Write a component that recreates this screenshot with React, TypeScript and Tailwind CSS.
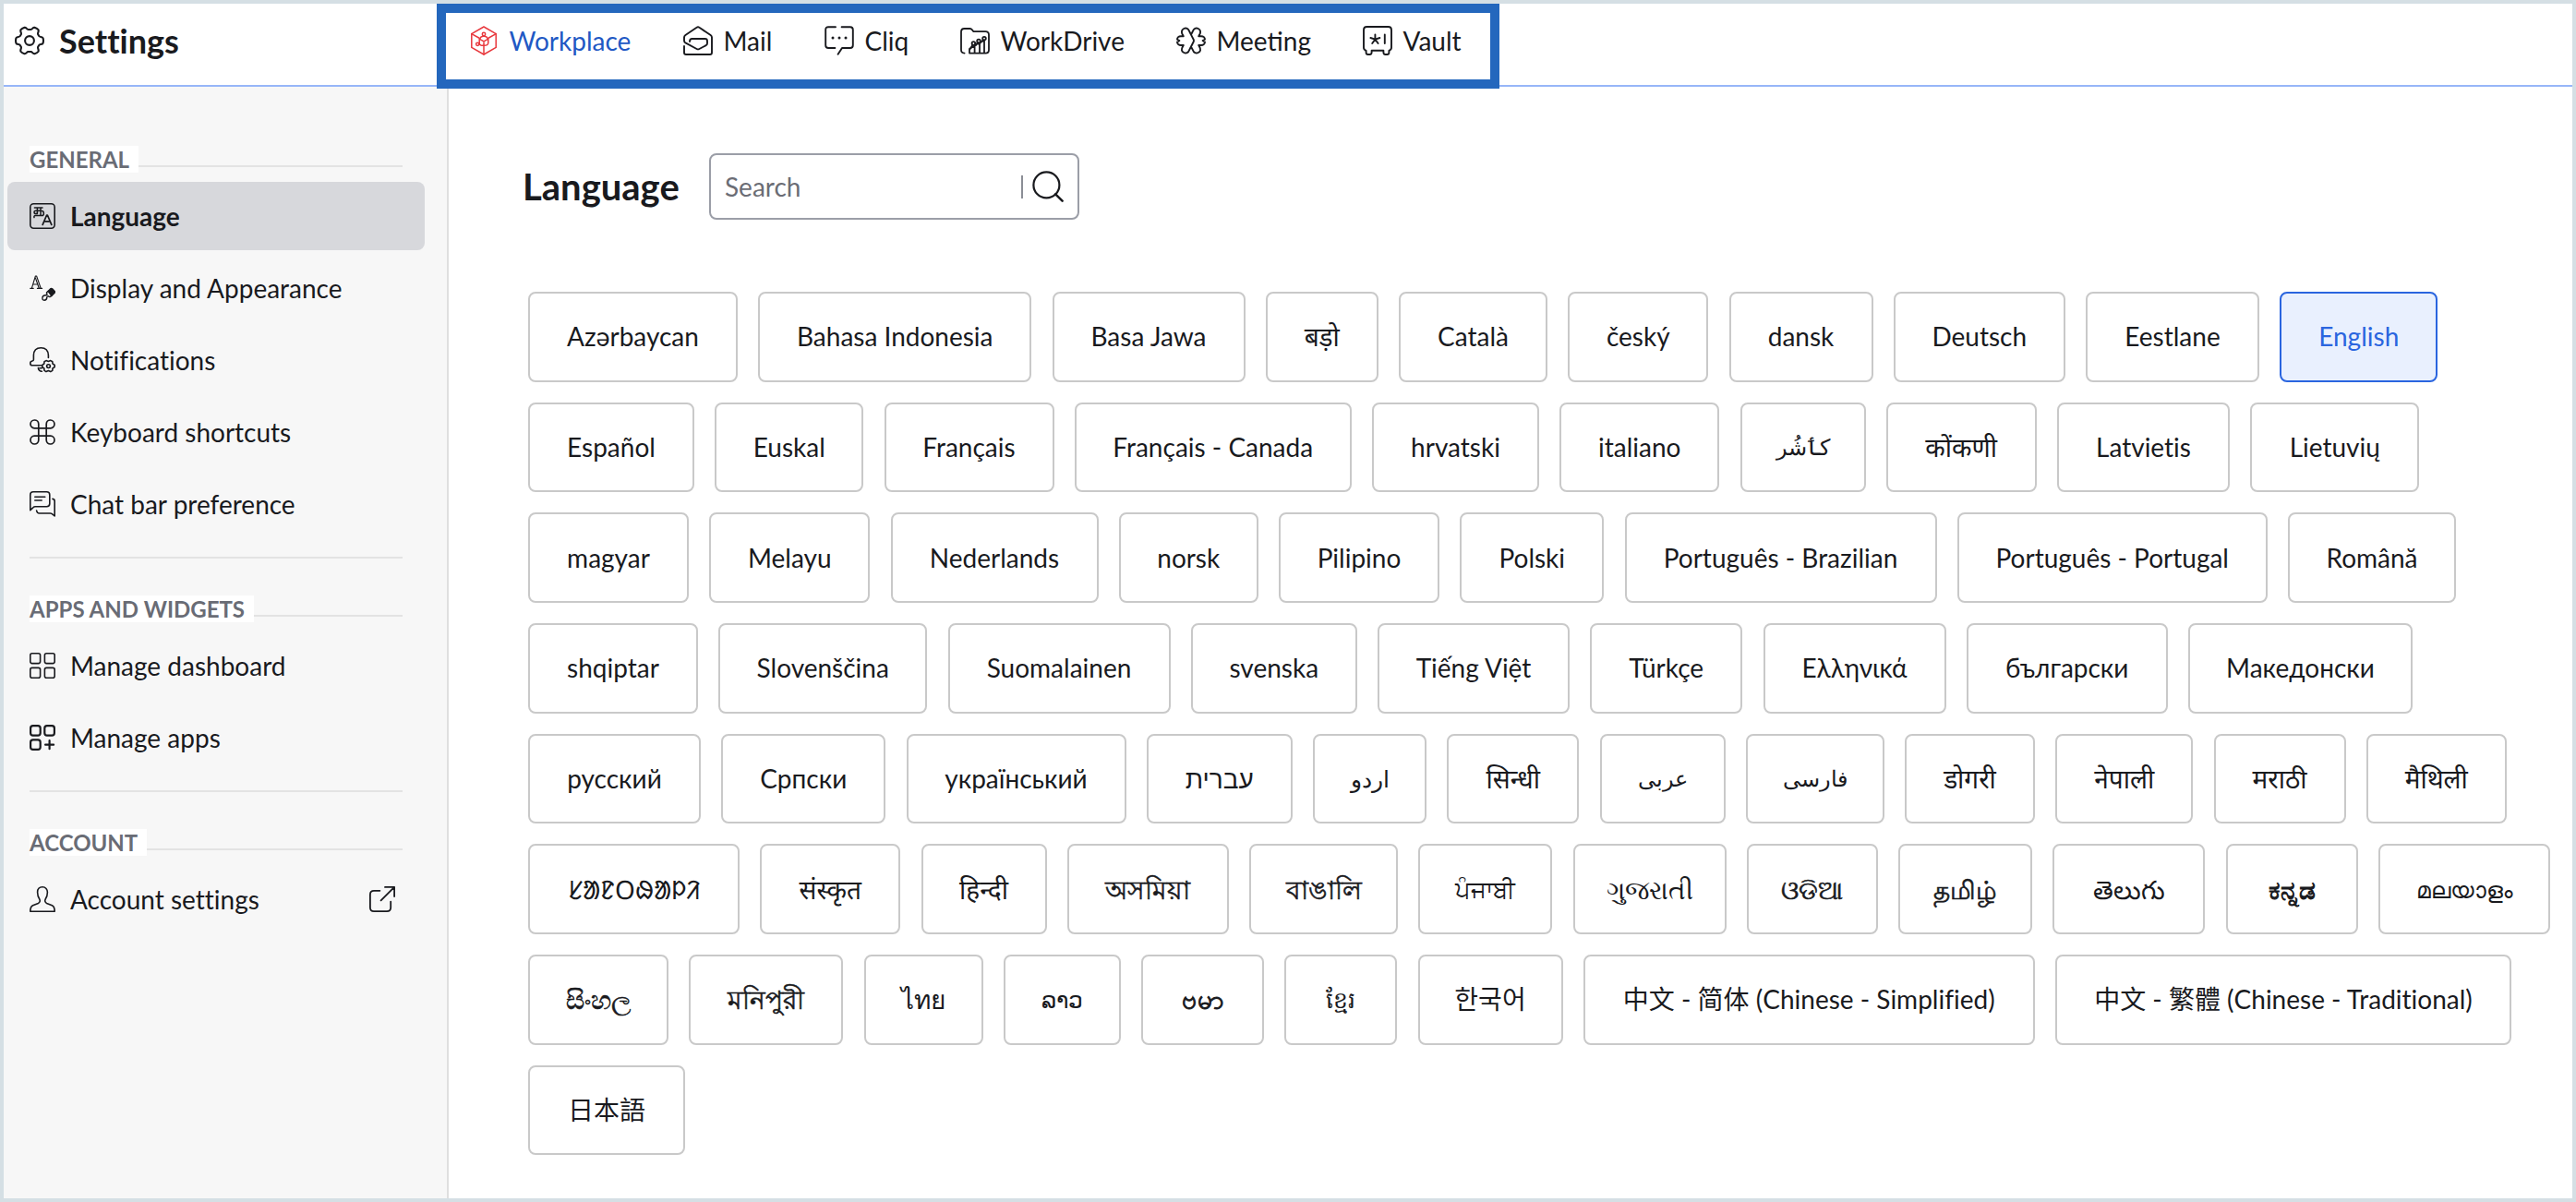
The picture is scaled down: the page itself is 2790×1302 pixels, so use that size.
import type { ReactNode } from "react";

type SvgProps = { children: ReactNode; size?: string; box?: string; sw?: number };

function Svg({ children, size = "size-7", box = "0 0 28 28", sw = 1.8 }: SvgProps) {
  return (
    <svg
      viewBox={box}
      className={`${size} shrink-0`}
      fill="none"
      stroke="currentColor"
      strokeWidth={sw}
      strokeLinecap="round"
      strokeLinejoin="round"
    >
      {children}
    </svg>
  );
}

const BIG = "size-8";
const BIG_BOX = "0 0 32 32";

const GearIcon = () => (
  <Svg size={BIG} box={BIG_BOX} sw={2.1}>
    <path d="M10.5 1.8 C12.6 1.4 12.8 4 14.6 4 H17.4 C19.2 4 19.4 1.4 21.5 1.8 C23 2.3 24.6 3.2 25.4 4.2 C26.6 6 24.4 7.6 25.2 9.2 L26.2 11 C27.2 12.4 30 11.4 30.6 13.4 C31.1 15.2 31.1 16.8 30.6 18.6 C30 20.6 27.2 19.6 26.2 21 L25.2 22.8 C24.4 24.4 26.6 26 25.4 27.8 C24.6 28.8 23 29.7 21.5 30.2 C19.4 30.6 19.2 28 17.4 28 H14.6 C12.8 28 12.6 30.6 10.5 30.2 C9 29.7 7.4 28.8 6.6 27.8 C5.4 26 7.6 24.4 6.8 22.8 L5.8 21 C4.8 19.6 2 20.6 1.4 18.6 C0.9 16.8 0.9 15.2 1.4 13.4 C2 11.4 4.8 12.4 5.8 11 L6.8 9.2 C7.6 7.6 5.4 6 6.6 4.2 C7.4 3.2 9 2.3 10.5 1.8 Z" />
    <circle cx="16" cy="16" r="4.9" />
  </Svg>
);

const WorkplaceIcon = () => (
  <svg viewBox="0 0 28 32" className="h-8 w-7 shrink-0" fill="none" stroke="#e8383d" strokeWidth="1.5" strokeLinejoin="round" strokeLinecap="round">
    <path d="M14 1 L27.2 8.6 V23.4 L14 31 L0.8 23.4 V8.6 Z" />
    <path d="M0.8 8.6 L8.6 13 M27.2 8.6 L19.4 13 M14 18 V31" />
    <circle cx="14" cy="9" r="1.7" />
    <path d="M10 14.6 C9.6 12.4 11.4 11.2 14 11.2 C16.6 11.2 18.4 12.4 18 14.6 L14 16.8 Z" />
    <path d="M9.2 13.4 V18.6 C9.2 21.6 12.4 21.4 14 21.2 M18.8 13.4 V18.6 C18.8 21 16 21.4 14 21.2" />
    <circle cx="7.2" cy="19.8" r="1.6" />
  </svg>
);

const MailIcon = () => (
  <Svg size={BIG} box={BIG_BOX} sw={1.9}>
    <path d="M1 22 V29 Q1 31 3 31 H29 Q31 31 31 29 V12.5 Q31 11 29.6 10 L17.4 1.8 Q16 0.8 14.6 1.8 L2.4 10 Q1 11 1 12.5 V16 Q1 17.6 2.4 18.4 L14.6 25 Q16 25.8 17.4 25 L24.6 21.2 Q26 20.4 26 19 V16.4 Q26 14 23.6 14 H9.6 Q7 14 7 17" />
  </Svg>
);

const CliqIcon = () => (
  <Svg size={BIG} box={BIG_BOX} sw={1.9}>
    <path d="M12 1.2 H4.2 Q1.2 1.2 1.2 4.2 V21 Q1.2 24 4.2 24 H11.4 M18.6 1.2 H27.8 Q30.8 1.2 30.8 4.2 V21 Q30.8 24 27.8 24 H19 L14.6 30.8" />
    <path d="M9 13 h0.01 M16 13 h0.01 M23 13 h0.01" strokeWidth="3" />
  </Svg>
);

const WorkDriveIcon = () => (
  <Svg size={BIG} box={BIG_BOX} sw={1.8}>
    <path d="M4.6 29.6 Q1 29.6 1 26 V6.4 Q1 3 4.4 3 H10.4 Q12 3 13 4.4 L14.4 6.2 H27.4 Q31 6.2 31 9.8 V26 Q31 29.6 27.4 29.6 H10 V26 L13.4 20.8" />
    <path d="M10 25 L15.6 21.6 V29 M15.8 20.4 L21 19 V29 M18.8 18 L17 21 M22 17.8 L26 16 V29 M24.6 15.4 L21.6 18.6" />
    <circle cx="14.4" cy="19" r="1.8" />
    <circle cx="20" cy="16.4" r="1.8" />
    <circle cx="26" cy="13.6" r="1.8" />
  </Svg>
);

const MeetingIcon = () => (
  <Svg size={BIG} box={BIG_BOX} sw={1.9}>
    <path d="M16 9.6 L14.2 6 C13.2 2.8 10.6 1.8 8.2 3 C5.4 4.4 5.4 7 6.8 9.6 L7.8 11.2 H5 C2.6 11.2 1 12.8 1 14.6 L3.4 16 L1 17.6 C1 19.6 2.8 21 5 21 H7.8 L6.8 22.8 C5.4 25.4 5.4 27.6 8.2 29 C10.6 30.2 13.2 29.2 14.2 26 L18.8 17 Q19.2 16 18.8 15 L16 9.6 L17.8 6 C18.8 2.8 21.4 1.8 23.8 3 C26.6 4.4 26.6 7 25.2 9.6 L24.2 11.2 H27 C29.4 11.2 31 12.8 31 14.6 L28.6 16 L31 17.6 C31 19.6 29.2 21 27 21 H24.2 L25.2 22.8 C26.6 25.4 26.6 27.6 23.8 29 C21.4 30.2 18.8 29.2 17.8 26 L16 22.6" />
  </Svg>
);

const VaultIcon = () => (
  <Svg size={BIG} box={BIG_BOX} sw={1.9}>
    <path d="M4.4 1 H27.6 Q31 1 31 4.4 V23.6 Q31 26 28.4 27 V29 Q28.4 31 26.4 31 H24.4 Q22.6 31 22.4 29 V26.8 H9.6 V29 Q9.4 31 7.6 31 H5.6 Q3.6 31 3.6 29 V27 Q1 26 1 23.6 V4.4 Q1 1 4.4 1 Z" />
    <path d="M13.4 9.4 V14.6 M8.4 13 L13.4 14.6 L18.4 13 M13.4 14.6 L10.2 19 M13.4 14.6 L16.6 19 M23.8 9.4 V19" />
  </Svg>
);

const LanguageIcon = () => (
  <Svg sw={1.6}>
    <rect x="0.8" y="0.8" width="26.4" height="26.4" rx="3.6" />
    <path d="M5.4 5 H14 M8.4 5 V11.4 M5 15.6 Q4.4 13.6 6.4 13.6 H13.4 Q15.4 13.6 15.4 11 Q15.4 8.2 12.6 8.2 H6.8 Q5 8.2 5 9.8 Q5 11.6 6.8 11.6 Q8.6 11.6 8.6 9.8 M12 5 V13.4" strokeWidth="1.5" />
    <path d="M14.2 23.4 L18.6 13 H19.4 L23.8 23.4 M15.8 19.8 H22.2" strokeWidth="1.7" />
  </Svg>
);

const AppearanceIcon = () => (
  <Svg sw={1.4}>
    <path d="M0.8 14.4 H4.2 M8.4 14.4 H13.6 M2.4 14.2 L6.4 1 H7.6 L12.2 14.2 M3.8 10 H9 M6.4 3 L10.2 14" strokeWidth="1.1" />
    <path d="M20 17.4 L23 14.6 Q23.8 14.2 24.6 14.8 L27.4 17.8 Q27.8 19 26.8 19.4 L23.8 22.4 Z" fill="currentColor" />
    <path d="M20 17.4 L18.6 18.8 Q18 19.8 19 20.4 Q19.2 22 17.4 21.8 Q14.6 21.8 14 24 Q13.4 27 16 27.2 Q18.6 27.2 18.8 24.4 Q18.6 22.8 20.2 22.6 Q21.4 24 22.4 23.4 L23.8 22.4" />
  </Svg>
);

const BellGearIcon = () => (
  <Svg sw={1.6}>
    <path d="M20.4 11.4 V8.8 Q20 0.8 12.4 0.8 Q4.6 0.8 4.4 8.8 V13.6 Q4.4 14.8 3 15 Q0.8 15.4 0.8 17.4 Q0.8 19.8 3.2 19.8 H12.6 M9.4 22.6 Q9.8 26 13.4 26.2 M13.4 22.8 H11" />
    <path d="M18 14.6 L20.4 15.4 L22.8 14.6 L24.8 15.8 L25 18 L27.2 19.4 V21.6 L25 23 L24.8 25.4 L22.8 26.6 L20.4 25.6 L18 26.6 L16 25.4 L15.8 23 L13.8 21.6 V19.4 L15.8 18 L16 15.8 Z" />
    <circle cx="20.5" cy="20.6" r="1.9" />
  </Svg>
);

const CommandIcon = () => (
  <Svg sw={1.7}>
    <path d="M9.8 5.2 A4.4 4.4 0 1 0 5.2 9.8 H22.8 A4.4 4.4 0 1 0 18.2 5.2 V22.8 A4.4 4.4 0 1 0 22.8 18.2 H5.2 A4.4 4.4 0 1 0 9.8 22.8 Z" />
  </Svg>
);

const ChatIcon = () => (
  <Svg sw={1.6}>
    <path d="M0.8 20.6 V4 Q0.8 0.8 4 0.8 H18.6 Q21.8 0.8 21.8 4 V13.6 Q21.8 16.8 18.6 16.8 H6.2 Q4.8 16.8 3.8 17.8 Z" />
    <path d="M5.8 6.2 H16.8 M5.8 10 H13.2" />
    <path d="M25 8.4 Q27.2 8.8 27.2 11 V27 L24 24.4 Q23.4 24 22.4 24 H10.6 Q8 24 7.6 21" />
  </Svg>
);

const DashboardIcon = () => (
  <Svg sw={1.6}>
    <rect x="0.8" y="0.8" width="10.8" height="10.8" rx="2" />
    <rect x="16.4" y="0.8" width="10.8" height="10.8" rx="2" />
    <rect x="0.8" y="16.4" width="10.8" height="10.8" rx="2" />
    <rect x="16.4" y="16.4" width="10.8" height="10.8" rx="2" />
  </Svg>
);

const AppsIcon = () => (
  <Svg sw={2.2}>
    <rect x="1.1" y="1.1" width="10.6" height="10.6" rx="2.6" />
    <rect x="16.3" y="1.1" width="10.6" height="10.6" rx="2.6" />
    <rect x="1.1" y="16.3" width="10.6" height="10.6" rx="2.6" />
    <path d="M21.6 17.2 V26.2 M17.1 21.7 H26.1" />
  </Svg>
);

const AccountIcon = () => (
  <Svg sw={1.6}>
    <path d="M14 0.8 C10.6 0.8 8.6 3.2 8.6 6.6 C8.6 9.6 9.4 12 10.8 14 C11.8 15.8 11.2 17.6 9.4 18.4 L3.6 20.8 C1.6 21.8 0.8 24 0.8 27.2 H27.2 C27.2 24 26.4 21.8 24.4 20.8 L18.6 18.4 C16.8 17.6 16.2 15.8 17.2 14 C18.6 12 19.4 9.6 19.4 6.6 C19.4 3.2 17.4 0.8 14 0.8 Z" />
  </Svg>
);

const ExternalIcon = () => (
  <Svg sw={1.8}>
    <path d="M11.4 4.8 H5 Q0.9 4.8 0.9 9 V23 Q0.9 27.1 5 27.1 H19 Q23.2 27.1 23.2 23 V16.6 M17 0.9 H27.1 V11 M27.1 0.9 L12.6 15.4" />
  </Svg>
);

const SearchIcon = () => (
  <svg viewBox="0 0 34 34" className="size-[34px] shrink-0" fill="none" stroke="currentColor" strokeWidth="2.2" strokeLinecap="round">
    <circle cx="15.4" cy="15.4" r="14" />
    <path d="M25.2 25.4 L32.6 32.6" strokeWidth="2.6" />
  </svg>
);

const tabs: [string, () => ReactNode, string][] = [
  ["Workplace", WorkplaceIcon, "w-[230px] gap-[14px] text-[#2158c4]"],
  ["Mail", MailIcon, "w-[153px] gap-3"],
  ["Cliq", CliqIcon, "w-[147px] gap-3"],
  ["WorkDrive", WorkDriveIcon, "w-[234px] gap-3"],
  ["Meeting", MeetingIcon, "w-[202px] gap-3"],
  ["Vault", VaultIcon, "gap-3"],
];

type Item = { label: string; Icon: () => ReactNode; active?: boolean; external?: boolean };

const groups: { title: string; items: Item[] }[] = [
  {
    title: "GENERAL",
    items: [
      { label: "Language", Icon: LanguageIcon, active: true },
      { label: "Display and Appearance", Icon: AppearanceIcon },
      { label: "Notifications", Icon: BellGearIcon },
      { label: "Keyboard shortcuts", Icon: CommandIcon },
      { label: "Chat bar preference", Icon: ChatIcon },
    ],
  },
  {
    title: "APPS AND WIDGETS",
    items: [
      { label: "Manage dashboard", Icon: DashboardIcon },
      { label: "Manage apps", Icon: AppsIcon },
    ],
  },
  { title: "ACCOUNT", items: [{ label: "Account settings", Icon: AccountIcon, external: true }] },
];

// Scripts whose glyphs are drawn lighter than the Latin text get a thin stroke.
const heavier = "[-webkit-text-stroke:0.6px_currentColor]";

const rows: [string, string, string?][][] = [
  [
    ["Azərbaycan", "w-[227px]"],
    ["Bahasa Indonesia", "w-[296px]"],
    ["Basa Jawa", "w-[209px]"],
    ["बड़ो", "w-[122px]"],
    ["Català", "w-[161px]"],
    ["český", "w-[152px]"],
    ["dansk", "w-[156px]"],
    ["Deutsch", "w-[186px]"],
    ["Eestlane", "w-[188px]"],
    ["English", "w-[171px]"],
  ],
  [
    ["Español", "w-[180px]"],
    ["Euskal", "w-[161px]"],
    ["Français", "w-[184px]"],
    ["Français - Canada", "w-[300px]"],
    ["hrvatski", "w-[181px]"],
    ["italiano", "w-[173px]"],
    ["کٲشُر", "w-[136px]", "text-[24px]"],
    ["कोंकणी", "w-[163px]"],
    ["Latvietis", "w-[187px]"],
    ["Lietuvių", "w-[183px]"],
  ],
  [
    ["magyar", "w-[174px]"],
    ["Melayu", "w-[174px]"],
    ["Nederlands", "w-[225px]"],
    ["norsk", "w-[151px]"],
    ["Pilipino", "w-[174px]"],
    ["Polski", "w-[156px]"],
    ["Português - Brazilian", "w-[338px]"],
    ["Português - Portugal", "w-[336px]"],
    ["Română", "w-[182px]"],
  ],
  [
    ["shqiptar", "w-[184px]"],
    ["Slovenščina", "w-[226px]"],
    ["Suomalainen", "w-[241px]"],
    ["svenska", "w-[180px]"],
    ["Tiếng Việt", "w-[208px]"],
    ["Türkçe", "w-[165px]"],
    ["Ελληνικά", "w-[198px]"],
    ["български", "w-[218px]"],
    ["Македонски", "w-[243px]"],
  ],
  [
    ["русский", "w-[187px]"],
    ["Српски", "w-[178px]"],
    ["український", "w-[238px]"],
    ["עברית", "w-[158px]"],
    ["اردو", "w-[123px]", "text-[25px]"],
    ["सिन्धी", "w-[143px]"],
    ["عربی", "w-[136px]", "text-[24px]"],
    ["فارسی", "w-[150px]", "text-[24px]"],
    ["डोगरी", "w-[141px]"],
    ["नेपाली", "w-[149px]"],
    ["मराठी", "w-[143px]"],
    ["मैथिली", "w-[152px]"],
  ],
  [
    ["ᱥᱟᱱᱛᱷᱟᱞᱤ", "w-[229px]"],
    ["संस्कृत", "w-[152px]"],
    ["हिन्दी", "w-[136px]"],
    ["অসমিয়া", "w-[175px]", heavier],
    ["বাঙালি", "w-[161px]", heavier],
    ["ਪੰਜਾਬੀ", "w-[145px]", "text-[26px]"],
    ["ગુજરાતી", "w-[166px]"],
    ["ଓଡିଆ", "w-[142px]", heavier],
    ["தமிழ்", "w-[145px]", heavier],
    ["తెలుగు", "w-[165px]"],
    ["ಕನ್ನಡ", "w-[143px]", "[-webkit-text-stroke:1px_currentColor]"],
    ["മലയാളം", "w-[186px]", "text-[25px]"],
  ],
  [
    ["සිංහල", "w-[152px]", heavier],
    ["মনিপুরী", "w-[167px]", heavier],
    ["ไทย", "w-[129px]"],
    ["ລາວ", "w-[127px]", "text-[25px]"],
    ["ဗမာ", "w-[133px]", "[-webkit-text-stroke:1px_currentColor]"],
    ["ខ្មែរ", "w-[122px]", "text-[25px]"],
    ["한국어", "w-[157px]"],
    ["中文 - 简体 (Chinese - Simplified)", "w-[489px]"],
    ["中文 - 繁體 (Chinese - Traditional)", "w-[494px]"],
  ],
  [["日本語", "w-[170px]"]],
];

function Sidebar() {
  return (
    <aside className="w-[482px] shrink-0 border-r-2 border-[#dfdfdf] bg-[#f7f7f7] pt-16">
      {groups.map((group, i) => (
        <section key={group.title} className={i > 0 ? "mt-5" : ""}>
          {i > 0 && <div className="mr-12 mb-10 ml-7 h-0.5 bg-[#e3e3e3]" />}
          <div className="mr-12 ml-7 flex h-[29px]">
            <h2 className="shrink-0 bg-white pr-2.5 text-[24px] leading-[29px] font-bold text-[#696c75]">
              {group.title}
            </h2>
            <div className="mt-[21px] h-0.5 flex-1 bg-[#e3e3e3]" />
          </div>
          <nav className="mt-2.5 mr-6 ml-1 flex flex-col gap-1">
            {group.items.map(({ label, Icon, active, external }) => (
              <a
                key={label}
                className={`flex h-[74px] items-center rounded-lg px-6 ${active ? "bg-[#d7d8dc] font-bold" : ""}`}
              >
                <Icon />
                <span className="ml-4 flex-1 whitespace-nowrap">{label}</span>
                {external && (
                  <span className="mr-2">
                    <ExternalIcon />
                  </span>
                )}
              </a>
            ))}
          </nav>
        </section>
      ))}
    </aside>
  );
}

export default function App() {
  return (
    <div className="flex h-[1302px] w-[2790px] flex-col overflow-hidden border-4 border-[#d5dfe4] bg-white font-['Lato','Noto_Sans','Noto_Sans_CJK_SC',sans-serif] text-[28px] leading-[34px] text-[#191a1e] [font-variant-ligatures:no-common-ligatures]">
      <header className="flex h-[90px] shrink-0 border-b-2 border-[#97b6f8]">
        <div className="flex w-[468.5px] shrink-0 items-center gap-4 pb-2 pl-3">
          <GearIcon />
          <h1 className="text-[36px] leading-10 font-bold">Settings</h1>
        </div>
        <nav className="z-10 flex h-[92px] w-[1151px] items-center border-10 border-[#2467bd] bg-white pb-3 pl-[27px] [font-variant-ligatures:common-ligatures]">
          {tabs.map(([label, Icon, cls]) => (
            <a key={label} className={`flex shrink-0 items-center whitespace-nowrap ${cls}`}>
              <Icon />
              <span>{label}</span>
            </a>
          ))}
        </nav>
      </header>
      <div className="flex flex-1">
        <Sidebar />
        <main className="flex-1 pt-[72px] pl-20">
          <div className="flex items-center">
            <h2 className="w-[202px] text-[40px] leading-[48px] font-bold">Language</h2>
            <div className="flex h-[72px] w-[401px] items-center rounded-lg border-2 border-[#9b9ea7] pr-[15px] pl-[15px]">
              <span className="flex-1 text-[#6b6d75]">Search</span>
              <span className="mr-2.5 h-[25px] w-0.5 bg-[#8b8e96]" />
              <SearchIcon />
            </div>
          </div>
          <div className="mt-[78.2px] ml-1.5 flex flex-col gap-[22.15px]">
            {rows.map((row, i) => (
              <div key={i} className="flex gap-[22.25px]">
                {row.map(([label, width, script]) => (
                  <button
                    key={label}
                    className={`flex h-[97.5px] shrink-0 items-center justify-center rounded-lg border-2 pb-px whitespace-nowrap ${width} ${script ?? ""} ${
                      label === "English"
                        ? "border-[#2a65df] bg-[#e9f0fe] text-[#2a65df]"
                        : "border-[#c9c9c9] bg-white"
                    }`}
                  >
                    {label}
                  </button>
                ))}
              </div>
            ))}
          </div>
        </main>
      </div>
    </div>
  );
}
